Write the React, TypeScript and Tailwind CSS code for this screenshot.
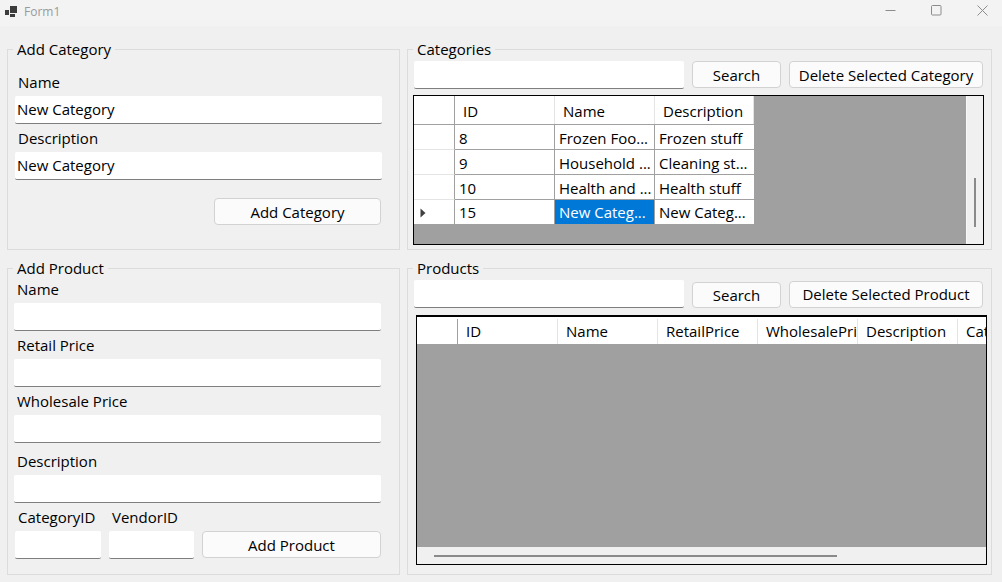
import React from "react";

const font = "font-['Open_Sans','Noto_Sans',sans-serif]";

function TextBox({ value = "", className = "" }: { value?: string; className?: string }) {
  return (
    <input
      readOnly
      defaultValue={value}
      className={`h-[28px] bg-white border-b border-[#7f7f7f] rounded-[2px] pl-[2px] pb-[2px] text-[15px] text-black outline-none ${className}`}
    />
  );
}

function Btn({ children, className = "" }: { children: React.ReactNode; className?: string }) {
  return (
    <button className={`bg-[#fbfbfb] border border-[#d2d2d2] rounded-[4px] text-[15px] text-black leading-none pt-[2px] ${className}`}>
      {children}
    </button>
  );
}

function Group({ title, className = "", children }: { title: string; className?: string; children: React.ReactNode }) {
  return (
    <fieldset className={`border border-[#dcdcdc] ${className}`}>
      <legend className="ml-[5px] px-[4px] h-[20px] leading-[20px] text-[15px] text-black">{title}</legend>
      {children}
    </fieldset>
  );
}

function Label({ children, className = "" }: { children: React.ReactNode; className?: string }) {
  return <div className={`text-[15px] text-black ${className}`}>{children}</div>;
}

const catRows = [
  { id: "8", name: "Frozen Foo...", desc: "Frozen stuff" },
  { id: "9", name: "Household ...", desc: "Cleaning st..." },
  { id: "10", name: "Health and ...", desc: "Health stuff" },
  { id: "15", name: "New Categ...", desc: "New Categ...", selected: true },
];

function CategoriesGrid() {
  return (
    <div className="mt-[6px] ml-[5px] w-[571px] h-[150px] border border-black bg-[#a0a0a0] flex text-[15px] text-black">
      <div className="w-[552px] flex flex-col">
        <div className="flex h-[29px] bg-white w-[340px] border-b border-[#a0a0a0]">
          <div className="w-[41px] border-r border-[#a0a0a0]" />
          {["ID", "Name", "Description"].map((h, i) => (
            <div key={h} className={`${i === 2 ? "w-[99px]" : "w-[100px]"} pl-[8px] border-r border-[#e4e4e4] flex items-center pt-[3px]`}>
              {h}
            </div>
          ))}
        </div>
        {catRows.map((r) => (
          <div key={r.id} className={`flex w-[340px] ${r.selected ? "h-[24px]" : "h-[25px]"}`}>
            <div className={`w-[41px] bg-white border-r border-[#a0a0a0] flex items-center pl-[6px] ${r.selected ? "pt-[2px]" : "border-b border-b-[#e4e4e4]"}`}>
              {r.selected && (
                <svg width="6" height="10" viewBox="0 0 6 10">
                  <path d="M0.5 0.5 L5.5 5 L0.5 9.5 Z" fill="#404040" />
                </svg>
              )}
            </div>
            <div className={`w-[100px] bg-white pl-[4px] border-r border-[#a0a0a0] flex items-center ${r.selected ? "" : "pt-[2px] border-b border-b-[#a0a0a0]"}`}>{r.id}</div>
            <div className={`w-[100px] pl-[4px] border-r border-[#a0a0a0] flex items-center whitespace-nowrap overflow-hidden ${r.selected ? "bg-[#0078d7] text-white" : "pt-[2px] bg-white border-b border-b-[#a0a0a0]"}`}>{r.name}</div>
            <div className={`w-[99px] bg-white pl-[4px] flex items-center whitespace-nowrap overflow-hidden ${r.selected ? "" : "pt-[2px] border-b border-b-[#a0a0a0]"}`}>{r.desc}</div>
          </div>
        ))}
      </div>
      <div className="flex-1 bg-[#f0f0f0] border-l border-[#f8f8f8] pl-[7px] pt-[82px]">
        <div className="w-[2px] h-[49px] bg-[#8a8a8a]" />
      </div>
    </div>
  );
}

const prodCols = ["ID", "Name", "RetailPrice", "WholesalePrice", "Description", "CategoryID"];

function ProductsGrid() {
  return (
    <div className="mt-[7px] ml-[8px] w-[571px] h-[250px] border border-black border-t-2 bg-[#a0a0a0] flex flex-col text-[15px] text-black">
      <div className="flex h-[27px] bg-white overflow-hidden shrink-0 pt-[2px]">
        <div className="w-[41px] shrink-0 border-r border-[#a0a0a0]" />
        {prodCols.map((h) => (
          <div key={h} className="w-[100px] shrink-0 pl-[8px] border-r border-[#e4e4e4] flex items-center overflow-hidden whitespace-nowrap">
            {h}
          </div>
        ))}
      </div>
      <div className="flex-1" />
      <div className="h-[17px] bg-[#f0f0f0] pl-[17px] pt-[8px] shrink-0">
        <div className="h-[2px] w-[403px] bg-[#8a8a8a]" />
      </div>
    </div>
  );
}

export default function App() {
  return (
    <div className={`w-[1002px] h-[582px] bg-[#f0f0f0] overflow-hidden flex flex-col ${font}`}>
      <div className="h-[26px] bg-[#f3f3f3] flex items-center shrink-0 pl-[5px] pr-[14px]">
        <svg width="12" height="12" viewBox="0 0 12 12" className="mb-[3px]">
          <rect x="0" y="4" width="4" height="5" fill="#3c3c3c" />
          <rect x="5" y="0" width="7" height="7" fill="#3c3c3c" />
          <rect x="5" y="8" width="5" height="3" fill="#3c3c3c" />
        </svg>
        <span className="ml-[7px] text-[12px] text-[#9a9a9a] mb-[3px]">Form1</span>
        <div className="ml-auto flex items-center gap-[35px] mb-[6px]">
          <svg width="11" height="11" viewBox="0 0 11 11"><path d="M0.5 5.5 H10.5" stroke="#8c8c8c" fill="none" /></svg>
          <svg width="11" height="11" viewBox="0 0 11 11"><rect x="0.5" y="0.5" width="9.5" height="9.5" rx="1" stroke="#8c8c8c" fill="none" /></svg>
          <svg width="11" height="11" viewBox="0 0 11 11"><path d="M0.5 0.5 L10.5 10.5 M10.5 0.5 L0.5 10.5" stroke="#8c8c8c" fill="none" /></svg>
        </div>
      </div>

      <div className="grid grid-cols-[393px_585px] gap-x-[7px] grid-rows-[211px_317px] gap-y-[8px] pl-[7px] pt-[13px]">
        <Group title="Add Category">
          <Label className="ml-[10px] mt-[11px] h-[26px] leading-[24px]">Name</Label>
          <div className="ml-[7px] flex flex-col">
            <TextBox value="New Category" className="w-[367px]" />
            <Label className="ml-[3px] h-[28px] leading-[28px]">Description</Label>
            <TextBox value="New Category" className="w-[367px]" />
          </div>
          <div className="flex justify-end mr-[18px] mt-[18px]">
            <Btn className="w-[167px] h-[27px]">Add Category</Btn>
          </div>
        </Group>

        <Group title="Categories">
          <div className="flex items-start ml-[6px] mt-[2px]">
            <TextBox className="w-[270px]" />
            <Btn className="w-[89px] h-[27px] ml-[8px]">Search</Btn>
            <Btn className="w-[194px] h-[27px] ml-[8px]">Delete Selected Category</Btn>
          </div>
          <CategoriesGrid />
        </Group>

        <Group title="Add Product">
          <div className="ml-[6px] flex flex-col">
            <Label className="ml-[3px] h-[25px] leading-[22px]">Name</Label>
            <TextBox className="w-[367px]" />
            <Label className="ml-[3px] h-[28px] leading-[28px]">Retail Price</Label>
            <TextBox className="w-[367px]" />
            <Label className="ml-[3px] h-[28px] leading-[28px]">Wholesale Price</Label>
            <TextBox className="w-[367px]" />
            <Label className="ml-[3px] h-[32px] leading-[36px]">Description</Label>
            <TextBox className="w-[367px]" />
            <div className="flex h-[28px] mt-0">
              <Label className="ml-[4px] w-[94px] h-[28px] leading-[28px]">CategoryID</Label>
              <Label className="h-[28px] leading-[28px]">VendorID</Label>
            </div>
            <div className="flex items-start ml-[1px]">
              <TextBox className="w-[86px]" />
              <TextBox className="w-[85px] ml-[8px]" />
              <Btn className="w-[179px] h-[27px] ml-[8px]">Add Product</Btn>
            </div>
          </div>
        </Group>

        <Group title="Products">
          <div className="flex items-start ml-[6px] mt-[2px] h-[28px]">
            <TextBox className="w-[270px]" />
            <Btn className="w-[89px] h-[26px] ml-[8px] mt-[2px] pb-[2px]">Search</Btn>
            <Btn className="w-[194px] h-[27px] ml-[8px] mt-[1px] pb-[2px]">Delete Selected Product</Btn>
          </div>
          <ProductsGrid />
        </Group>
      </div>
    </div>
  );
}
